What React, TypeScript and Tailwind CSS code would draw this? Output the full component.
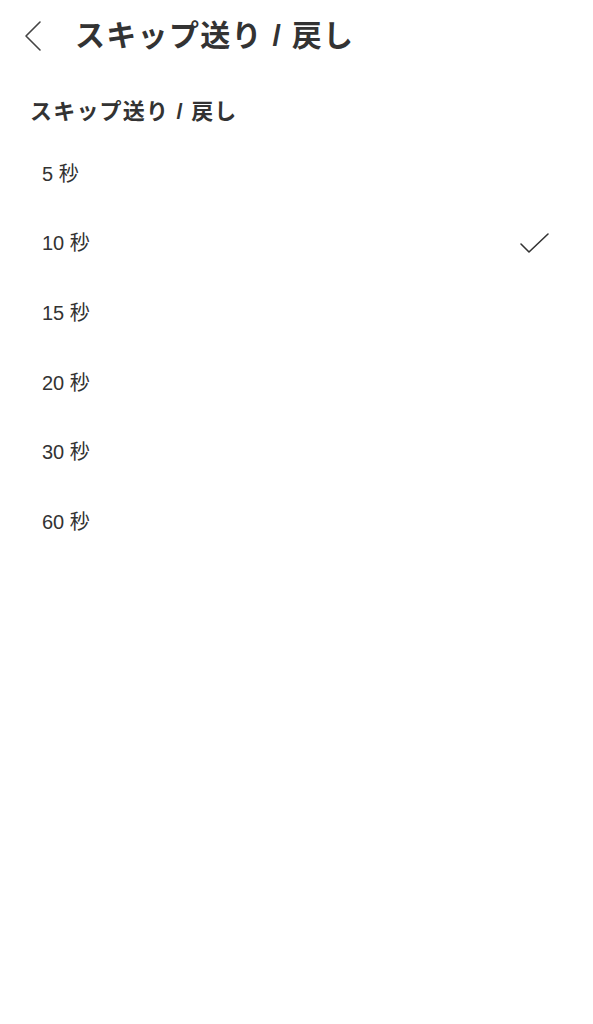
const OPTIONS = [5, 10, 15, 20, 30, 60];
const SELECTED = 10;

const JP = { fontFamily: '"Liberation Sans", "Noto Sans CJK JP", sans-serif' };

export default function App() {
  return (
    <div className="min-h-screen w-[593px] bg-white text-[#333333]" style={JP}>
      <header className="flex h-[72px] items-center">
        <button className="ml-[18px] flex h-[36px] w-[28px] items-center justify-center">
          <svg width="22" height="34" viewBox="0 0 22 34" fill="none">
            <path d="M19 3 L5 17 L19 31" stroke="#444" strokeWidth="1.6" strokeLinecap="round" strokeLinejoin="round" />
          </svg>
        </button>
        <h1 className="ml-[29px] text-[30px] font-bold leading-none tracking-[1.3px]">スキップ送り / 戻し</h1>
      </header>

      <section className="px-[30px] pt-[29px]">
        <h2 className="text-[22px] font-bold leading-none tracking-[1.2px]">スキップ送り / 戻し</h2>
        <ul className="mt-[16px]">
          {OPTIONS.map((s) => (
            <li key={s} className="flex h-[69.6px] items-center justify-between pl-[12px] pr-[12px]">
              <span className="text-[20px] leading-none">{s} 秒</span>
              {s === SELECTED && (
                <svg width="32" height="24" viewBox="0 0 32 24" fill="none">
                  <path d="M2 13 L10 21 L29 3" stroke="#333" strokeWidth="1.6" strokeLinecap="round" strokeLinejoin="round" />
                </svg>
              )}
            </li>
          ))}
        </ul>
      </section>
    </div>
  );
}
